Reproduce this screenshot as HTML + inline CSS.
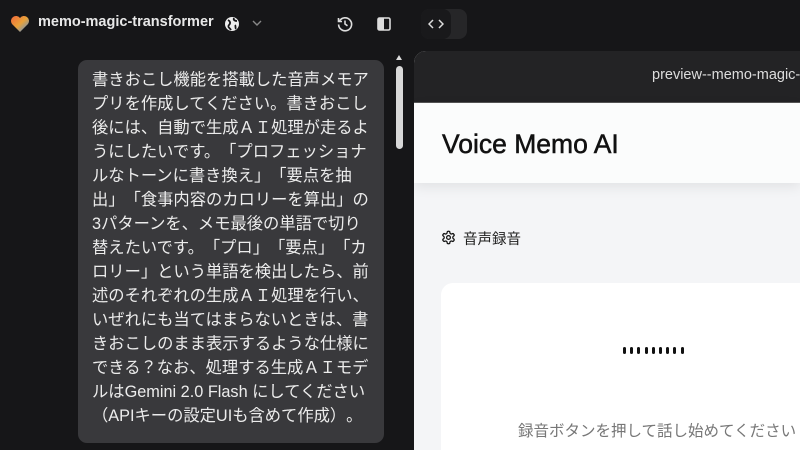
<!DOCTYPE html>
<html><head><meta charset="utf-8"><style>
*{margin:0;padding:0;box-sizing:border-box}
html,body{width:800px;height:450px;overflow:hidden}
body{background:#161618;font-family:"Liberation Sans","Noto Sans CJK JP",sans-serif;position:relative;text-spacing-trim:space-all}
.top{position:absolute;left:0;top:0;width:800px;height:48px}
.title{position:absolute;left:38px;top:14px;color:#e8e8e8;font-size:14.5px;font-weight:bold}
.bubble{position:absolute;left:78px;top:60px;width:306px;height:383px;background:#39393c;border-radius:9px}
.btext{position:absolute;left:92px;top:68px;color:#ececec;font-size:16.3px;line-height:24px;white-space:nowrap;text-spacing-trim:space-all;font-feature-settings:"chws" 0,"halt" 0,"palt" 0}
.sb{position:absolute;left:396px;top:66px;width:7px;height:83px;background:#d8d8d8;border-radius:4px}
.right{position:absolute;left:414px;top:51px;width:386px;height:399px;border-radius:12px 0 0 0;background:#f4f5f7;overflow:hidden}
.bar{height:52px;background:#232325;border-bottom:1px solid #555;color:#ddd;font-size:14.5px;padding:16px 0 0 238px;white-space:nowrap;overflow:hidden}
.hdr{height:80px;background:#fbfcfc;box-shadow:0 4px 12px rgba(0,0,0,.08);padding:26px 0 0 28px;font-size:26.5px;font-weight:normal;color:#111;-webkit-text-stroke:0.5px #111}
.card{position:absolute;left:27px;top:232px;width:359px;height:167px;background:#fff;border-radius:12px 0 0 0;overflow:hidden}
.dots{position:absolute;left:182px;top:64px;display:flex;gap:4.2px}
.dots i{display:block;width:3px;height:7px;border-radius:2px;background:#111}
</style></head><body>
<div class="top">
<svg style="position:absolute;left:10px;top:15px" width="20" height="18" viewBox="0 0 20 18"><defs><linearGradient id="g" x1="0" y1="0" x2="1" y2="1"><stop offset="0" stop-color="#f2693a"/><stop offset=".5" stop-color="#e8a23a"/><stop offset="1" stop-color="#4a8ee8"/></linearGradient></defs><path d="M10 17 L2 9 A4.8 4.8 0 0 1 10 3 A4.8 4.8 0 0 1 18 9 Z" fill="url(#g)"/></svg>
<div class="title">memo-magic-transformer</div>
<svg style="position:absolute;left:224px;top:16px" width="16" height="16" viewBox="0 0 16 16"><circle cx="8" cy="8" r="7" fill="#eee"/><path d="M4 4c2 1 3 3 1 5s1 3 2 5M10 2c-1 2 1 3 3 3M11 9c1 1 0 3 1 4" stroke="#161618" stroke-width="1.8" fill="none"/></svg>
<svg style="position:absolute;left:252px;top:19px" width="10" height="8" viewBox="0 0 10 8"><path d="M1 2l4 4 4-4" stroke="#888" stroke-width="1.4" fill="none"/></svg>
<svg style="position:absolute;left:337px;top:16px" width="16" height="16" viewBox="0 0 16 16" fill="none" stroke="#ddd" stroke-width="1.6"><path d="M2.5 5A6.5 6.5 0 1 1 1.6 8.5"/><path d="M1.5 2v3.5H5"/><path d="M8 4.5V8l2.5 1.8"/></svg>
<svg style="position:absolute;left:377px;top:17px" width="14" height="14" viewBox="0 0 14 14"><rect x="1" y="1" width="12" height="12" rx="1.5" fill="none" stroke="#ddd" stroke-width="1.6"/><rect x="1" y="1" width="6" height="12" fill="#ddd"/></svg>
<div style="position:absolute;left:421px;top:9px;width:46px;height:30px;border-radius:8px;background:#262628"></div>
<div style="position:absolute;left:421px;top:9px;width:30px;height:30px;border-radius:8px;background:#19191b"></div>
<svg style="position:absolute;left:428px;top:18px" width="16" height="12" viewBox="0 0 16 12" fill="none" stroke="#ddd" stroke-width="1.5"><path d="M5 2L1 6l4 4M11 2l4 4-4 4"/></svg>
</div>
<div class="bubble"></div>
<div class="btext">書きおこし機能を搭載した音声メモア<br>プリを作成してください。書きおこし<br>後には、自動で生成ＡＩ処理が走るよ<br>うにしたいです。「プロフェッショナ<br>ルなトーンに書き換え」「要点を抽<br>出」「食事内容のカロリーを算出」の<br>3パターンを、メモ最後の単語で切り<br>替えたいです。「プロ」「要点」「カ<br>ロリー」という単語を検出したら、前<br>述のそれぞれの生成ＡＩ処理を行い、<br>いぜれにも当てはまらないときは、書<br>きおこしのまま表示するような仕様に<br>できる？なお、処理する生成ＡＩモデ<br>ルはGemini 2.0 Flash にしてください<br>（APIキーの設定UIも含めて作成）。</div>
<div style="position:absolute;left:396px;top:55px;width:0;height:0;border-left:3.5px solid transparent;border-right:3.5px solid transparent;border-bottom:5px solid #ddd"></div>
<div class="sb"></div>
<div class="right">
<div class="bar">preview--memo-magic-transformer</div>
<div class="hdr">Voice Memo AI</div>
<svg style="position:absolute;left:27px;top:179px" width="15" height="15" viewBox="0 0 24 24" fill="none" stroke="#111" stroke-width="2"><path d="M12.22 2h-.44a2 2 0 0 0-2 2v.18a2 2 0 0 1-1 1.73l-.43.25a2 2 0 0 1-2 0l-.15-.08a2 2 0 0 0-2.73.73l-.22.38a2 2 0 0 0 .73 2.73l.15.1a2 2 0 0 1 1 1.72v.51a2 2 0 0 1-1 1.74l-.15.09a2 2 0 0 0-.73 2.73l.22.38a2 2 0 0 0 2.73.73l.15-.08a2 2 0 0 1 2 0l.43.25a2 2 0 0 1 1 1.73V20a2 2 0 0 0 2 2h.44a2 2 0 0 0 2-2v-.18a2 2 0 0 1 1-1.73l.43-.25a2 2 0 0 1 2 0l.15.08a2 2 0 0 0 2.73-.73l.22-.39a2 2 0 0 0-.73-2.73l-.15-.08a2 2 0 0 1-1-1.74v-.5a2 2 0 0 1 1-1.74l.15-.09a2 2 0 0 0 .73-2.73l-.22-.38a2 2 0 0 0-2.73-.73l-.15.08a2 2 0 0 1-2 0l-.43-.25a2 2 0 0 1-1-1.73V4a2 2 0 0 0-2-2z"/><circle cx="12" cy="12" r="3"/></svg>
<div style="position:absolute;left:49px;top:177px;font-size:14.5px;color:#222">音声録音</div>
<div class="card">
<div class="dots"><i></i><i></i><i></i><i></i><i></i><i></i><i></i><i></i><i></i></div>
<div style="position:absolute;left:77px;top:136px;font-size:15.5px;color:#777;white-space:nowrap">録音ボタンを押して話し始めてください</div>
</div>
</div>
</body></html>
